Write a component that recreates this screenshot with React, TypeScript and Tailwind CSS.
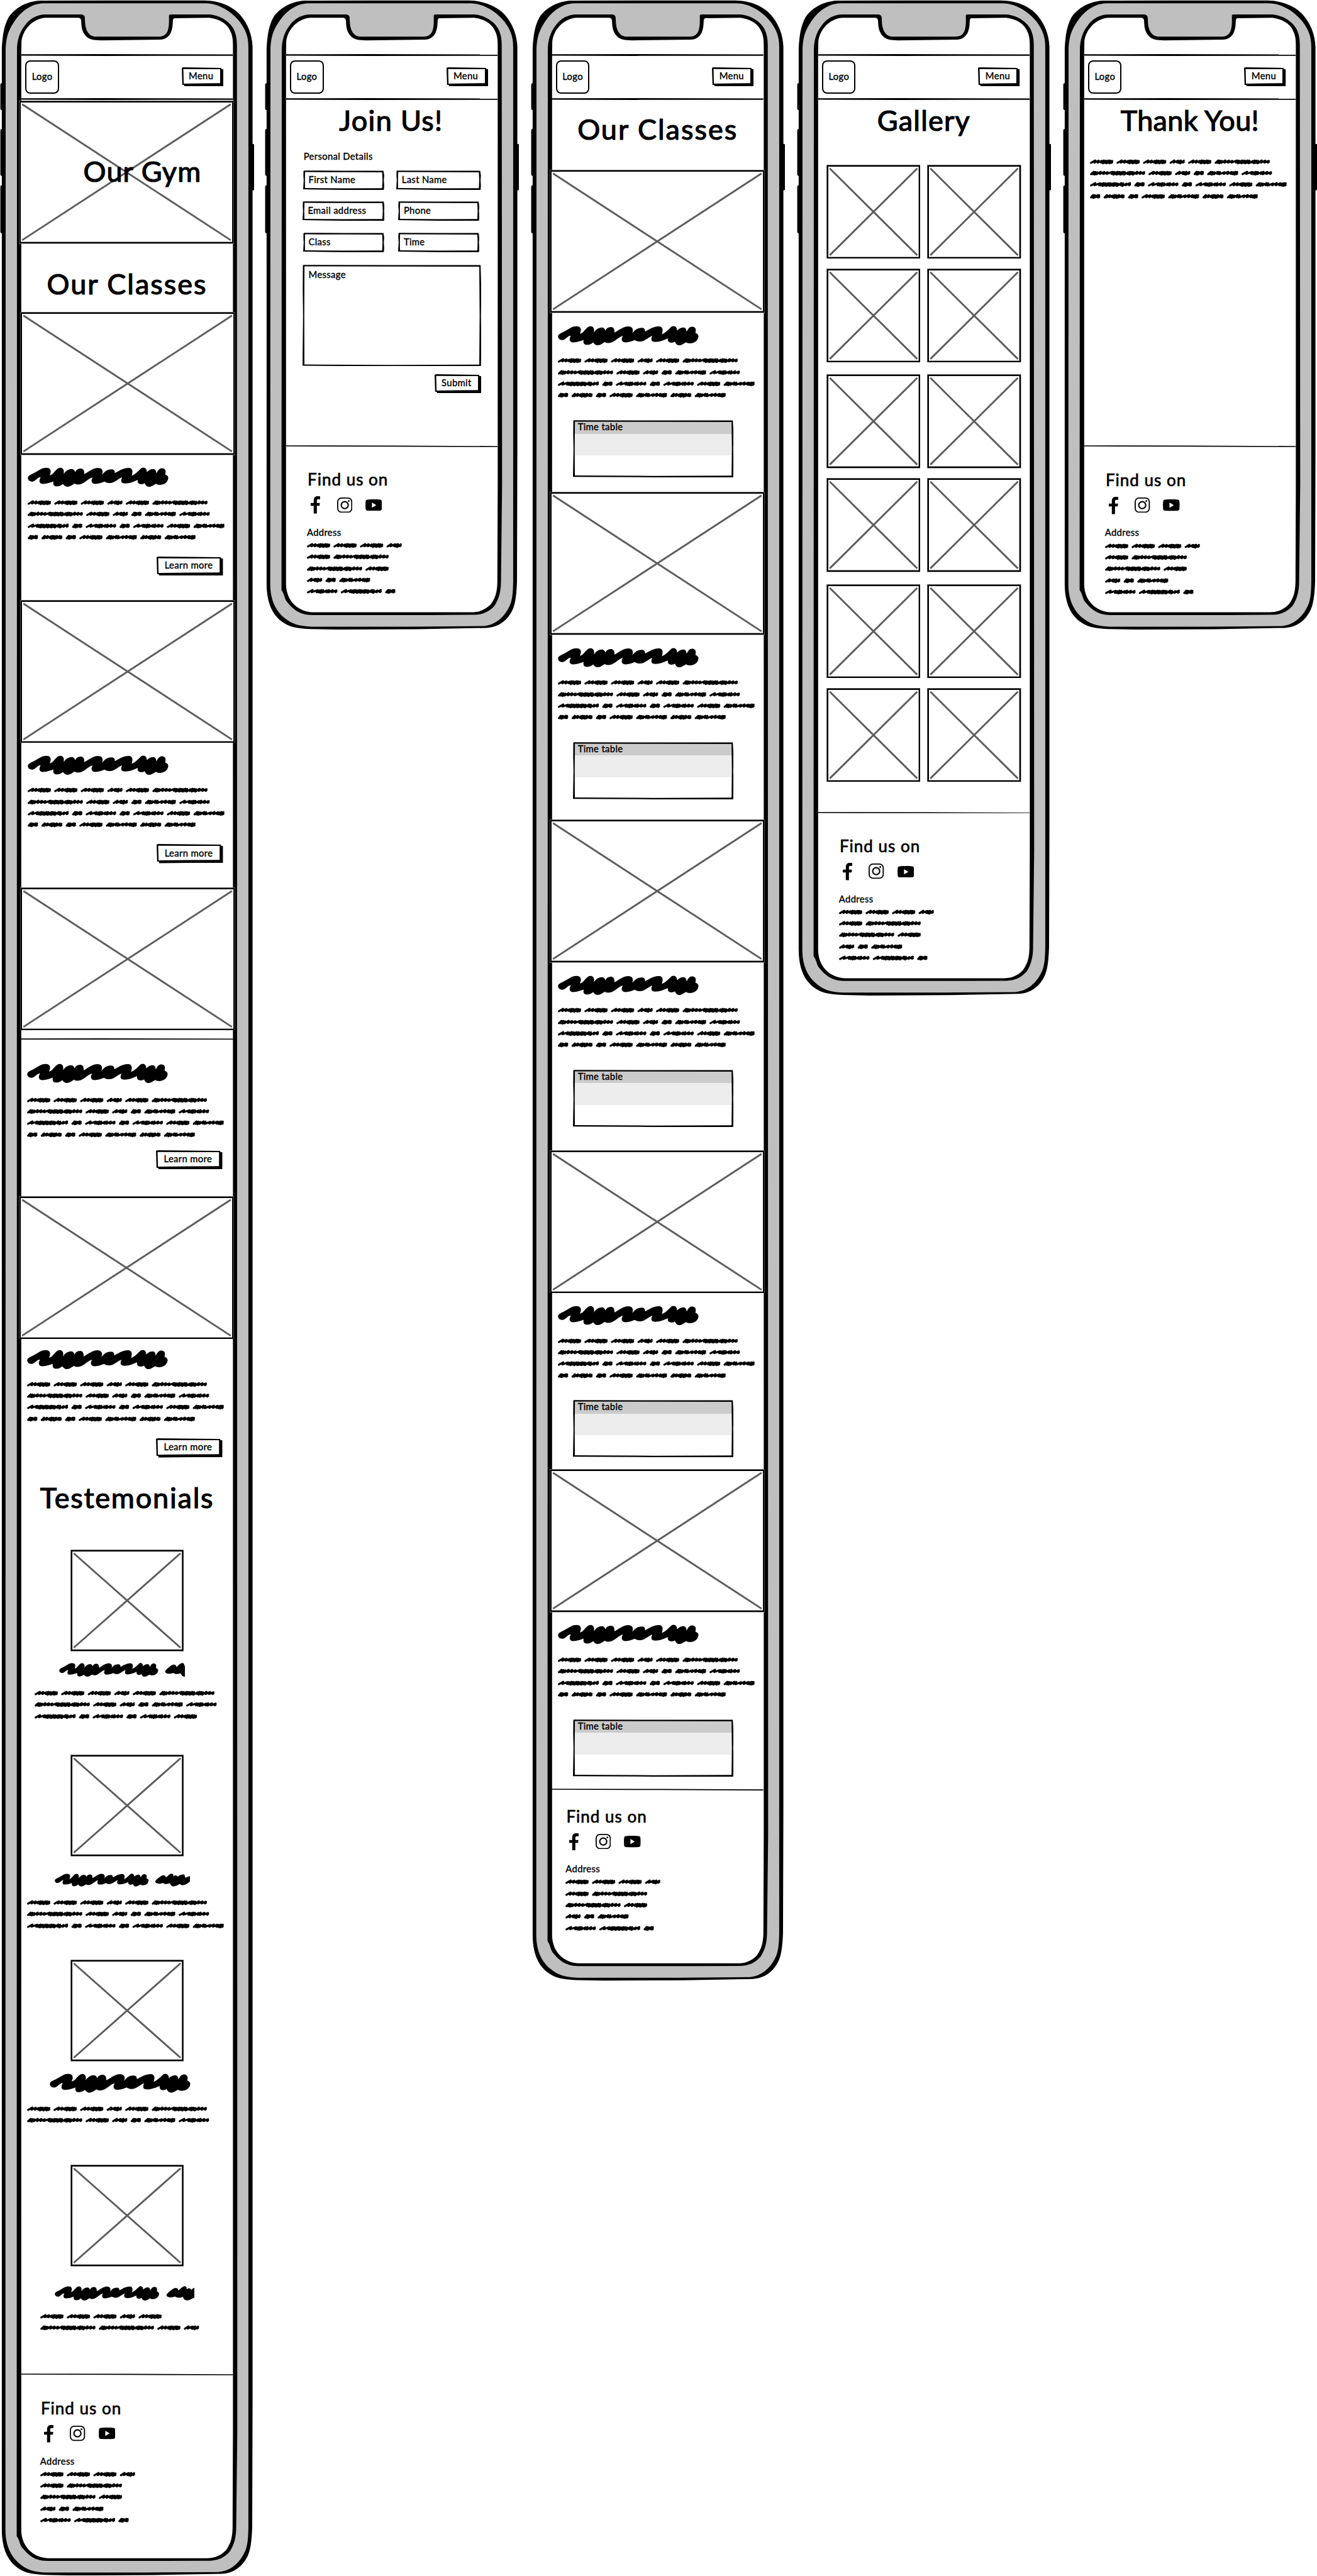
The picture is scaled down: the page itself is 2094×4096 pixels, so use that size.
import type { ReactNode } from "react";

/* Every spacing utility below is counted in wireframe units (see --spacing on the root). */

const cx = (...parts: (string | undefined)[]) => parts.filter(Boolean).join(" ");

/* ---------- scribbled placeholder text ---------- */

const WORDS: Record<string, { w: number; p: string }> = {
  A: { w: 64, p: "sssdddddd" },
  S: { w: 42, p: "sldds" },
  L: { w: 152, p: "dddsssldddddddsdddsss" },
  B: { w: 85.5, p: "dddsdlssddd" },
  C: { w: 84, p: "sldddsdss" },
  D: { w: 28.5, p: "dddsd" },
  E: { w: 113, p: "slddddddddddsdss" },
  F: { w: 58, p: "dssddddsd" },
};

const STEP: Record<string, number> = { s: 9, d: 4.6, l: 12 };

function wordPath(key: string, x0: number) {
  const { w, p } = WORDS[key];
  const total = p.split("").reduce((sum, c) => sum + STEP[c], 0);
  const k = (w - 8) / total;
  let x = x0 + 3;
  let d = `M${x} 18.8`;
  p.split("").forEach((c, i) => {
    const adv = STEP[c] * k;
    const top = 12.4 + (i % 3) * 0.6;
    const low = c === "d" ? 19 + (i % 2) * 1.2 : 18.2;
    d += `L${(x + adv + 2.2).toFixed(1)} ${top.toFixed(1)}L${(x + adv).toFixed(1)} ${low.toFixed(1)}`;
    x += adv;
  });
  d += `l2 -1.4`;
  return d;
}

function ScribbleLines({ lines, className }: { lines: string[]; className?: string }) {
  return (
    <div className={cx("flex flex-col", className)}>
      {lines.map((line, i) => {
        let x = 0;
        const d = line
          .split("")
          .map((key) => {
            const part = wordPath(key, x);
            x += WORDS[key].w + 9;
            return part;
          })
          .join("");
        return (
          <svg key={i} viewBox="0 0 560 31.75" className="block h-31.75 w-560">
            <path d={d} fill="none" stroke="#000" strokeWidth="5.6" strokeLinecap="round" strokeLinejoin="round" />
          </svg>
        );
      })}
    </div>
  );
}

const BODY = ["AAASAL", "LASDBC", "EDCDCAB", "DFDABFB"];
const QUOTE = ["AAASAL", "LASDBC", "EDCDCA"];
const ADDRESS = ["AAAS", "AL", "LA", "SDB", "CED"];

/* units: how much of the scribble (first word is 388 long) is visible */
function ScribbleTitle({ units = 389, className }: { units?: number; className?: string }) {
  return (
    <svg viewBox={`47 108 ${units * 2.8} 163`} preserveAspectRatio="none" className={cx("block shrink-0", className)}>
      <path d="M48 200C48 185 56 177 75 167C100 155 120 140 150 122C175 108 215 105 223 130C228 148 222 160 217 174C240 172 248 150 270 128C285 110 305 107 318 120C328 130 328 150 325 166C340 140 360 124 385 123C402 123 410 134 414 148C422 130 436 119 455 119C475 119 486 132 484 165C505 155 520 140 550 124C580 108 612 108 623 130C630 148 625 158 621 170C640 150 650 126 695 125C715 125 722 140 720 156C750 140 780 115 825 113C850 112 858 130 856 150L851 178C880 165 900 140 918 122C930 106 952 106 961 122C968 132 967 140 967 148C980 132 1000 122 1018 122C1034 123 1040 138 1041 158C1052 140 1060 117 1083 116C1105 116 1115 130 1112 150L1110 168C1128 174 1134 186 1133 200C1128 235 1100 254 1068 254C1052 254 1045 250 1038 245C1020 255 1005 270 985 270C970 270 960 262 951 240C935 252 910 252 900 238C896 230 896 222 897 213C870 228 830 243 800 243C775 243 768 230 770 215C771 205 774 198 777 191C755 198 730 225 700 236C680 242 660 240 641 227C620 236 595 246 570 246C545 246 538 228 541 212C543 204 546 198 549 191C520 200 500 225 470 243C445 256 420 254 410 243C390 255 375 270 355 270C340 270 328 260 319 246C300 265 270 272 255 262C243 254 244 240 246 226C225 235 195 246 165 246C140 246 136 228 139 212C141 204 144 196 147 190C130 188 115 210 100 220C85 230 55 232 48 200Z" />
      <path d="M1210 208C1215 190 1240 170 1270 145C1300 120 1330 125 1333 155C1350 150 1360 125 1390 112C1410 106 1424 118 1420 145C1440 125 1460 130 1468 150C1490 130 1520 115 1545 122C1558 135 1550 150 1560 160C1580 155 1600 140 1640 130V190C1600 210 1575 250 1545 250C1520 262 1505 245 1490 240C1460 262 1430 278 1400 262C1390 250 1385 240 1380 230C1350 240 1320 245 1300 225C1270 240 1215 240 1210 208Z" />
    </svg>
  );
}

/* ---------- sketched shapes ---------- */

function Placeholder({ w, h, className }: { w: number; h: number; className?: string }) {
  return (
    <svg viewBox={`0 0 ${w} ${h}`} preserveAspectRatio="none" className={cx("block shrink-0", className)}>
      <rect x="0.5" y="0.5" width={w - 1} height={h - 1} fill="#fff" stroke="#a8a8a8" strokeWidth="1" />
      <rect x="3" y="3" width={w - 6} height={h - 6} fill="#fff" stroke="#000" strokeWidth="4.4" />
      <path d={`M9 10L${w - 9} ${h - 10}M${w - 9} 10L9 ${h - 10}`} stroke="#5c5c5c" strokeWidth="5" fill="none" />
    </svg>
  );
}

function Rule({ thin, className }: { thin?: boolean; className?: string }) {
  return (
    <svg viewBox="0 0 582 5" preserveAspectRatio="none" className={cx("block h-5 w-582.5 shrink-0", className)}>
      <path d={thin ? "M0 0.4L300 0.8L582 2.2V5L300 4L0 3.2Z" : "M0 0.6L220 0L582 1V4.6L230 5L0 4.4Z"} />
    </svg>
  );
}

function Box({ w, h }: { w: number; h: number }) {
  return (
    <svg viewBox={`0 0 ${w} ${h}`} preserveAspectRatio="none" className="absolute inset-0 size-full">
      <path
        fillRule="evenodd"
        d={`M3 0.3L${w / 2} 1L${w - 2} 0.8L${w} ${h / 4}L${w - 1} ${h / 2}L${w} ${h * 0.8}L${w - 1} ${h}L${w / 2} ${h}L0 ${h - 1.5}L1.5 ${h / 2}L0.6 ${h / 4}L1 1.2ZM5.4 4.4L4.8 ${h / 2}L5.2 ${h - 5}L${w / 2} ${h - 4}L${w - 5.6} ${h - 4.6}L${w - 4.6} ${h / 2}L${w - 5.6} 5L${w / 2} 4.8Z`}
      />
    </svg>
  );
}

function Button({ w, children, className }: { w: number; children: ReactNode; className?: string }) {
  return (
    <div className={cx("relative flex h-53 items-center justify-center pr-7 pb-5", className)}>
      <svg viewBox={`0 0 ${w} 53`} preserveAspectRatio="none" className="absolute inset-0 size-full">
        <path
          fillRule="evenodd"
          d={`M0 1.4L5 0L${w - 5.5} 1.6V5H${w}V52L${w / 2} 52L6.5 53V48.5H1.5ZM4.4 4.6L5.4 45L${w / 2} 44L${w - 9} 43.6V5.4L${w / 2} 5Z`}
        />
      </svg>
      <span className="relative">{children}</span>
    </div>
  );
}

function Frame({ b }: { b: number }) {
  return (
    <svg viewBox={`0 0 700 ${b}`} preserveAspectRatio="none" className="absolute inset-0 size-full">
      <rect x="1" y="229" width="12" height="74" rx="4" />
      <rect x="1" y="355" width="12" height="129" rx="4" />
      <rect x="1" y="510" width="12" height="132" rx="4" />
      <rect x="684" y="396" width="16" height="128" rx="5" />
      <path
        d={`M5 132C7 100 10 72 24 47C40 24 70 4 110 1.8L300 1.5L562 1.5C605 2 640 18 661 41C682 66 694 95 695 129V${b - 480}L694 ${b - 133}C693 ${b - 105} 691 ${b - 75} 682 ${b - 55}C668 ${b - 26} 645 ${b - 7} 610 ${b - 5}L420 ${b - 1.5}L200 ${b - 0.5}L125 ${b - 2}C85 ${b - 3} 62 ${b - 10} 45 ${b - 24}C18 ${b - 45} 5 ${b - 80} 5 ${b - 127}Z`}
      />
      <path
        fill="#bfbfbf"
        d={`M15.6 132C17 105 22 86 35 66C52 38 80 10 120 9H566C600 9 636 30 660 60C676 82 683.5 100 683.5 129V${b - 133}C683 ${b - 100} 681 ${b - 78} 672 ${b - 62}C658 ${b - 34} 634 ${b - 12} 600 ${b - 10}L400 ${b - 8.5}L130 ${b - 8.5}C95 ${b - 9} 72 ${b - 17} 55 ${b - 32}C25 ${b - 56} 15 ${b - 90} 15 ${b - 127}Z`}
      />
      <path
        d={`M46.7 145C46 110 54 88 70 68C82 52 102 40 125 40H224C232 41 233.6 45 233.6 52C234 70 236 84 246 94C252 100 258 101 269 101H437C450 100 456 96 461 86C466 72 465 60 465 42L468 40H576C608 42 634 62 644 82C650 96 652 108 652 126L653 ${b - 400}L650 ${b - 133}C650 ${b - 108} 645 ${b - 85} 632 ${b - 66}C616 ${b - 48} 598 ${b - 42} 578 ${b - 41}L460 ${b - 40.5}H130C95 ${b - 41} 78 ${b - 56} 60 ${b - 78}C54 ${b - 86} 54 ${b - 98} 46 ${b - 109}Z`}
      />
      <path
        fill="#fff"
        d={`M58.5 150L59 118C60 84 90 50 127 49H216C222 50 223 53 223.5 58C224 74 225 88 238 101C248 110 258 110.5 278 111L441 109C456 108 464 100 469 92C476 78 475 66 476 54L479 50L576 49C604 52 626 66 634 86C640 98 641 110 641 126V${b - 400}L640 ${b - 130}C639 ${b - 100} 634 ${b - 88} 622 ${b - 70}C606 ${b - 54} 590 ${b - 48} 568 ${b - 48}H132C92 ${b - 50} 60 ${b - 78} 58.5 ${b - 124}Z`}
      />
    </svg>
  );
}

/* ---------- shared sections ---------- */

function Header() {
  return (
    <header className="flex h-126 flex-col justify-between">
      <Rule />
      <div className="flex h-116 items-start justify-between pr-27 pl-11.5">
        <div className="mt-12 flex h-91.5 w-92 items-center justify-center rounded-[8px] border-2 border-black pb-3">
          Logo
        </div>
        <Button w={114.5} className="mt-31 w-114.5">
          Menu
        </Button>
      </div>
      <Rule />
    </header>
  );
}

function Title({ children, className }: { children: ReactNode; className?: string }) {
  return (
    <h1
      className={cx(
        "h-78 w-582.5 text-center text-[45px] leading-none whitespace-nowrap [-webkit-text-stroke:1.2px_black]",
        className,
      )}
    >
      {children}
    </h1>
  );
}

function Footer({ className, inset }: { className?: string; inset: string }) {
  return (
    <footer className={className}>
      <Rule thin />
      <div className={cx("flex flex-col items-start", inset)}>
        <h2 className="ml-2 h-45 text-[26px] leading-none tracking-[1px] whitespace-nowrap [-webkit-text-stroke:0.7px_black]">
          Find us on
        </h2>
        <div className="mt-24 flex items-start">
          <svg viewBox="0 0 26 48" className="ml-10.5 h-48 w-26">
            <path d="M8.3 47.6V26.4H0V18.4H8.3V12C8.3 3 13 0 20 0L26 0.5V8H21C18 8 17 9.5 17 12V18.4H25.3L24.5 26.4H17V47.6Z" />
          </svg>
          <svg viewBox="0 0 42 42" className="mt-2.5 ml-46 h-42 w-42" fill="none" stroke="#000" strokeWidth="3.2">
            <rect x="1.6" y="1.6" width="38.8" height="38.8" rx="10.5" />
            <circle cx="21" cy="21" r="9.6" strokeWidth="3.6" />
            <circle cx="32.2" cy="9.8" r="2.5" fill="#000" stroke="none" />
          </svg>
          <svg viewBox="0 0 46 32" className="mt-8 ml-36 h-32 w-46">
            <path
              fillRule="evenodd"
              d="M6 0.8C17 0 30 0 40 0.8C44 1.2 45.2 3 45.5 7C46 13 46 19 45.5 25C45.2 29 44 30.6 40 31C30 32 17 32 6 31C2 30.6 0.8 29 0.5 25C0 19 0 13 0.5 7C0.8 3 2 1.2 6 0.8ZM18 8.6V23L30 15.8Z"
            />
          </svg>
        </div>
        <p className="mt-38 h-25.5">Address</p>
        <ScribbleLines lines={ADDRESS} className="mt-7.5" />
      </div>
    </footer>
  );
}

function Phone({ b, size, children }: { b: number; size: string; children: ReactNode }) {
  return (
    <section className={cx("shrink-0", size)}>
      <div className="relative h-full w-700">
        <Frame b={b} />
        <div className="relative ml-58.5 flex w-582.5 flex-col pt-149">
          <Header />
          {children}
        </div>
      </div>
    </section>
  );
}

function WideImage({ className }: { className?: string }) {
  return <Placeholder w={592} h={394} className={cx("h-394 w-592", className)} />;
}

function LearnMore({ className }: { className?: string }) {
  return (
    <Button w={182.5} className={cx("w-182.5", className)}>
      Learn more
    </Button>
  );
}

function TimeTableCard({ className }: { className: string }) {
  return (
    <article className={cx("flex flex-col", className)}>
      <WideImage className="-ml-6" />
      <ScribbleTitle className="mt-34 ml-16.5 h-54 w-388" />
      <ScribbleLines lines={BODY} className="mt-27 ml-16" />
      <div className="relative mt-52.5 ml-57.5 flex h-157.5 w-442 flex-col px-3 pt-2">
        <p className="h-35 bg-[#cbcbcb] pt-3.5 pl-11">Time table</p>
        <div className="h-60 bg-[#ededed]" />
        <Box w={442} h={157.5} />
      </div>
    </article>
  );
}

function Field({ w, children, className }: { w: number; children: ReactNode; className: string }) {
  return (
    <div className={cx("relative h-53.5 pt-12 pl-15", className)}>
      <Box w={w} h={53.5} />
      {children}
    </div>
  );
}

/* ---------- screens ---------- */

function HomeScreen() {
  return (
    <Phone b={7088} size="h-7088 w-728.5">
      <div className="relative mt-2 -ml-6">
        <WideImage />
        <p className="absolute top-156 left-177 text-[45px] leading-none tracking-[1.1px] whitespace-nowrap [-webkit-text-stroke:1.2px_black]">
          Our Gym
        </p>
      </div>
      <Title className="mt-71 tracking-[2px]">Our Classes</Title>

      <WideImage className="mt-39 -ml-4" />
      <ScribbleTitle className="mt-33.5 ml-18.5 h-54 w-388" />
      <ScribbleLines lines={BODY} className="mt-26.75 ml-18" />
      <LearnMore className="mt-37 ml-373" />

      <WideImage className="mt-66.5 -ml-4" />
      <ScribbleTitle className="mt-33.5 ml-18.5 h-54 w-388" />
      <ScribbleLines lines={BODY} className="mt-26.75 ml-18" />
      <LearnMore className="mt-37 ml-373" />

      <WideImage className="mt-66 -ml-4" />
      <div className="-ml-6 flex h-26 w-593 flex-col justify-end border-x-2 border-black">
        <Rule className="w-full" />
      </div>
      <ScribbleTitle className="mt-65.5 ml-16.5 h-54 w-388" />
      <ScribbleLines lines={BODY} className="mt-30 ml-16" />
      <LearnMore className="mt-27 ml-371" />

      <WideImage className="mt-73 -ml-6" />
      <ScribbleTitle className="mt-29 ml-16.5 h-54 w-388" />
      <ScribbleLines lines={BODY} className="mt-25 ml-16" />
      <LearnMore className="mt-38 ml-371" />

      <Title className="mt-72 tracking-[1.8px]">Testemonials</Title>

      <Placeholder w={312} h={280} className="mt-104 ml-135.5 h-280 w-312" />
      <ScribbleTitle units={492} className="mt-31.75 ml-104 h-38.5 w-345.5" />
      <ScribbleLines lines={QUOTE} className="mt-28.5 ml-37.5" />

      <Placeholder w={312} h={280} className="mt-90 ml-135.5 h-280 w-312" />
      <ScribbleTitle units={558} className="mt-46.5 ml-92 h-36 w-371.5" />
      <ScribbleLines lines={["AAASAL", "LASDBC", "EDCDCAB"]} className="mt-28.5 ml-16" />

      <Placeholder w={312} h={280} className="mt-78.5 ml-135.5 h-280 w-312" />
      <ScribbleTitle className="mt-32.5 ml-78.5 h-53 w-388" />
      <ScribbleLines lines={["AAASAL", "LASDBC"]} className="mt-28 ml-16" />

      <Placeholder w={312} h={280} className="mt-107 ml-135.5 h-280 w-312" />
      <ScribbleTitle units={520} className="mt-53.5 ml-92 h-40 w-385" />
      <ScribbleLines lines={["AAASA", "LLAS"]} className="mt-28 ml-52" />

      <Footer className="mt-110" inset="pt-67 pl-52" />
    </Phone>
  );
}

function JoinScreen() {
  return (
    <Phone b={1733} size="h-1733 w-731.5">
      <Title className="mt-18 -ml-2 tracking-[1.3px]">Join Us!</Title>
      <p className="mt-46.5 ml-48.5 h-25.5">Personal Details</p>
      <form className="mt-25.5 flex flex-col">
        <div className="flex">
          <Field w={223} className="ml-47 w-223">First Name</Field>
          <Field w={233} className="ml-33.5 w-233">Last Name</Field>
        </div>
        <div className="mt-32.5 flex">
          <Field w={225.5} className="ml-45 w-225.5">Email address</Field>
          <Field w={223.5} className="ml-38.5 w-223.5">Phone</Field>
        </div>
        <div className="mt-32.5 flex">
          <Field w={223} className="ml-47 w-223">Class</Field>
          <Field w={223.5} className="ml-39 w-223.5">Time</Field>
        </div>
        <div className="relative mt-34.5 ml-45 h-279.5 w-492 pt-14.5 pl-17">
          <Box w={492} h={279.5} />
          Message
        </div>
        <Button w={128.5} className="mt-21.5 ml-408.5 w-128.5">
          Submit
        </Button>
      </form>
      <Footer className="mt-142.5" inset="pt-67 pl-57.5" />
    </Phone>
  );
}

function ClassesScreen() {
  return (
    <Phone b={5451} size="h-5451 w-732.5">
      <Title className="mt-41 tracking-[2px]">Our Classes</Title>
      <TimeTableCard className="mt-74" />
      <TimeTableCard className="mt-40" />
      <TimeTableCard className="mt-56" />
      <TimeTableCard className="mt-63" />
      <TimeTableCard className="mt-32.5" />
      <Footer className="mt-34" inset="pt-47.5 pl-38" />
    </Phone>
  );
}

function GalleryScreen() {
  return (
    <Phone b={2740} size="h-2740 w-732">
      <Title className="mt-18 tracking-[1.2px]">Gallery</Title>
      <div className="mt-81.75 ml-22.5 flex flex-col gap-33">
        {[0, 1, 2].map((group) => (
          <div key={group} className="grid w-537 grid-cols-2 gap-x-19 gap-y-26.5">
            {[0, 1, 2, 3].map((item) => (
              <Placeholder key={item} w={259} h={259} className="h-259 w-259" />
            ))}
          </div>
        ))}
      </div>
      <Footer className="mt-81.5" inset="pt-67 pl-57.5" />
    </Phone>
  );
}

function ThankYouScreen() {
  return (
    <Phone b={1733} size="h-1733 w-699">
      <Title className="mt-18 tracking-[0.3px]">Thank You!</Title>
      <ScribbleLines lines={BODY} className="mt-57.5 ml-16" />
      <Footer className="mt-670.5" inset="pt-67 pl-57.5" />
    </Phone>
  );
}

export default function App() {
  return (
    <main className="flex h-[4096px] w-[2094px] items-start overflow-hidden bg-white font-['Lato','Open_Sans',sans-serif] text-[14.8px] leading-none tracking-[0.35px] whitespace-nowrap text-black [--spacing:0.5778px] [-webkit-text-stroke:0.4px_black]">
      <HomeScreen />
      <JoinScreen />
      <ClassesScreen />
      <GalleryScreen />
      <ThankYouScreen />
    </main>
  );
}
